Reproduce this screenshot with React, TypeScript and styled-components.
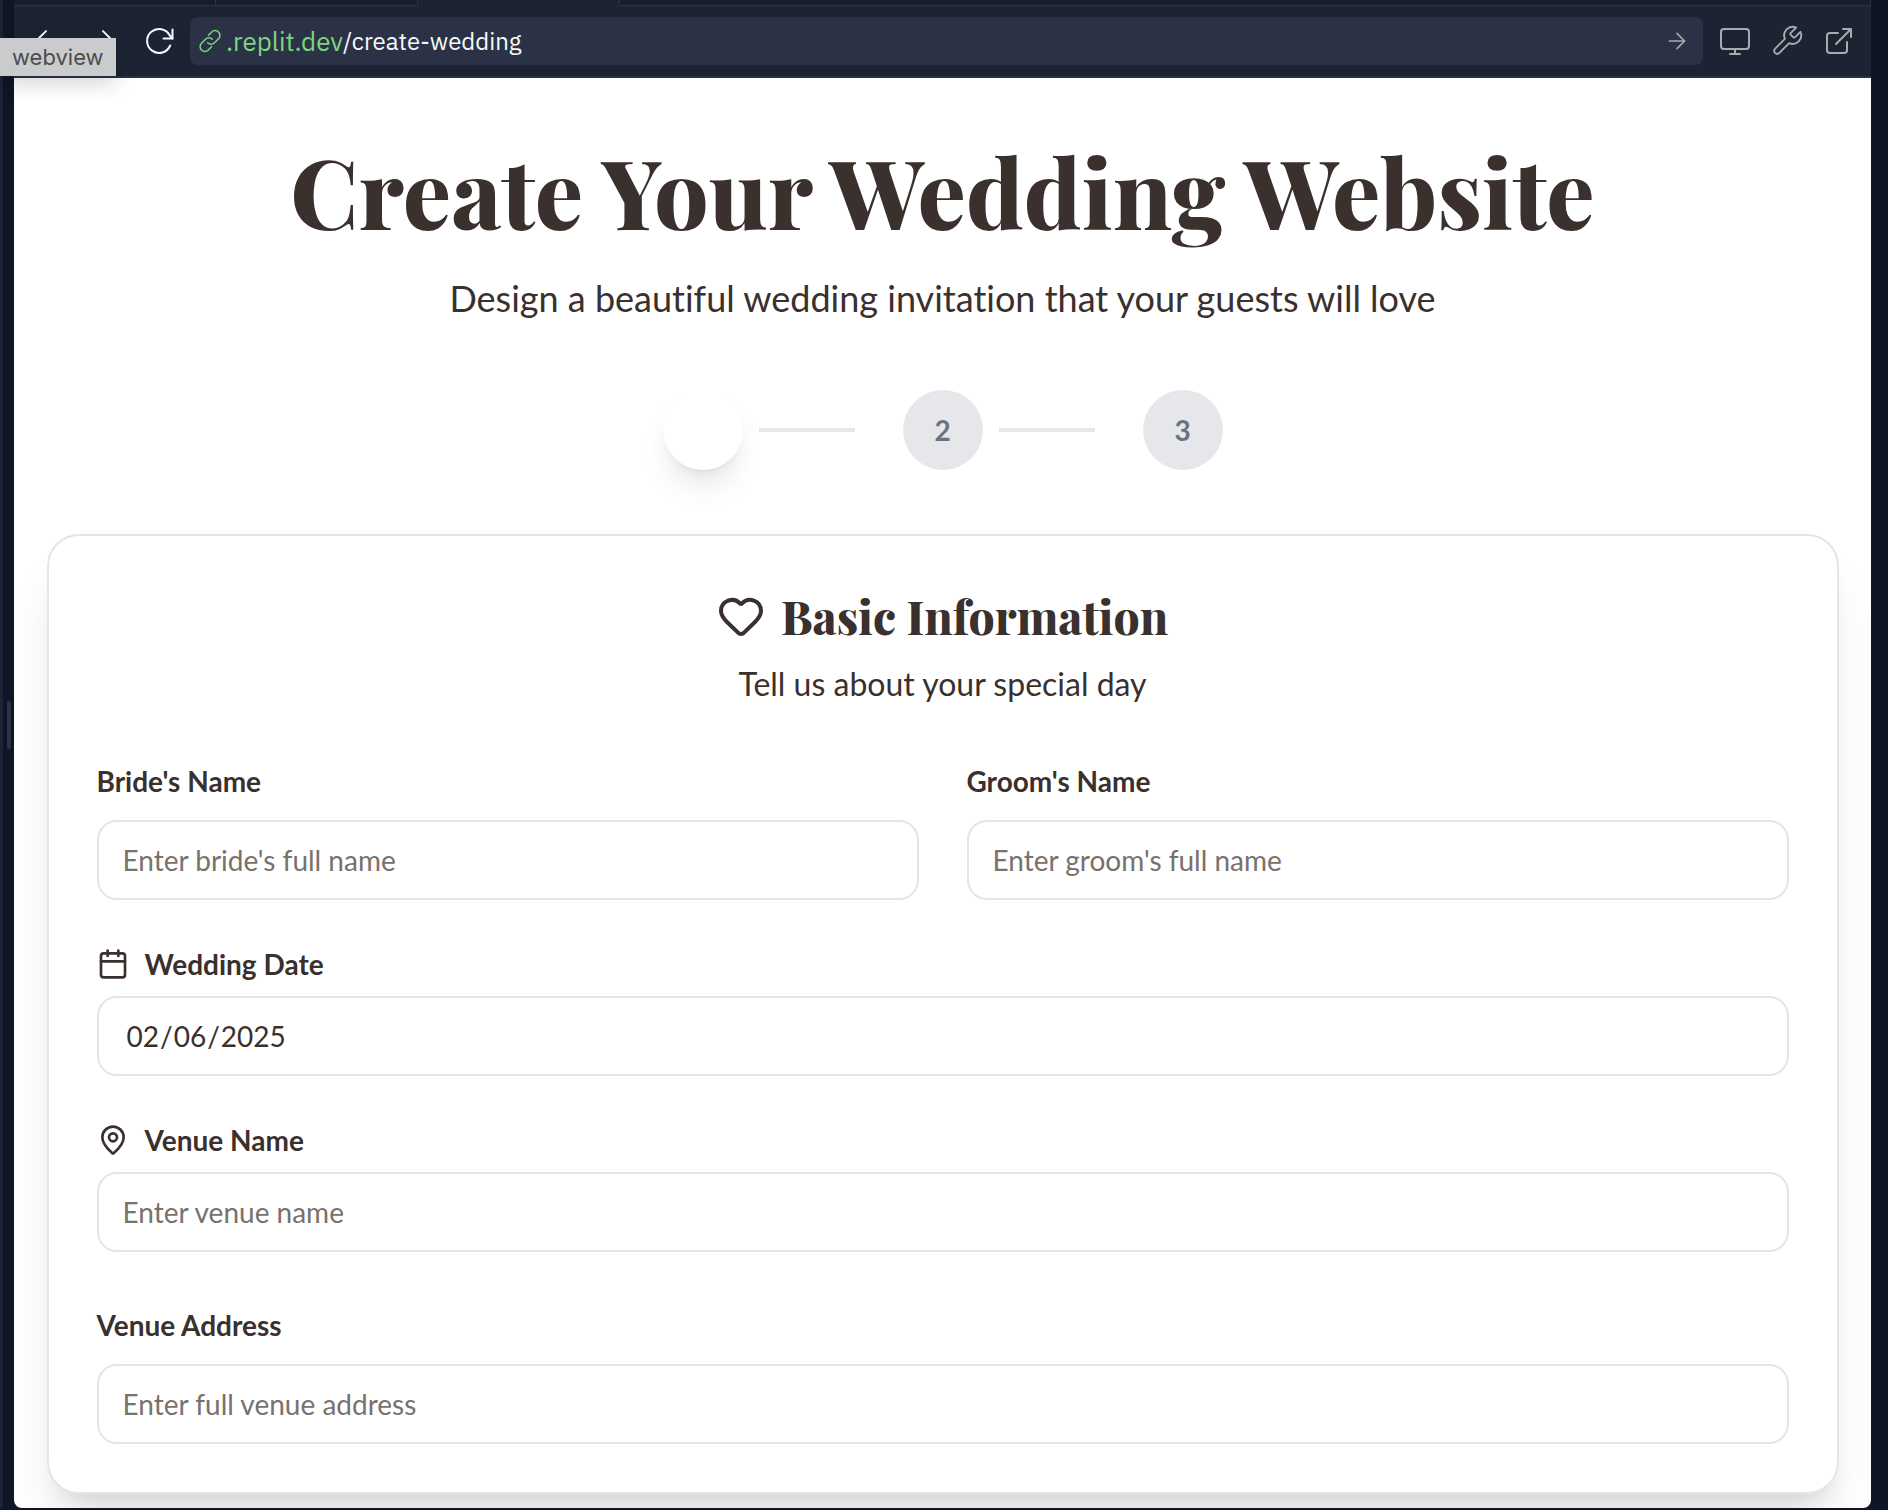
import React from "react";
import styled, { createGlobalStyle } from "styled-components";
import {
  ArrowLeft,
  ArrowRight,
  Calendar,
  Heart,
  MapPin,
} from "lucide-react";

const sans = `Lato, "Liberation Sans", sans-serif`;
const serif = `"Playfair Display", "Liberation Serif", serif`;
const chrome = `"IBM Plex Sans", Roboto, "Liberation Sans", sans-serif`;

const color = {
  ink: "#3a302d",
  muted: "#78716c",
  line: "#e5e5e5",
  shell: "#0e1525",
  bar: "#1c2333",
  tab: "#171d2c",
  raised: "#2b3245",
};

const GlobalStyle = createGlobalStyle`
  *, *::before, *::after { box-sizing: border-box; }
  body { margin: 0; background: ${color.shell}; }
  h1, h2, p { margin: 0; }
  button, input { font: inherit; color: inherit; }
`;

const Shell = styled.div`
  position: relative;
  display: flex;
  min-height: 100vh;
  padding: 0 17px 2px 0;
  background: ${color.shell};
`;

const Sidebar = styled.div`
  width: 3px;
  background: ${color.bar};
  border-bottom-right-radius: 8px;
`;

const Divider = styled.div`
  display: flex;
  align-items: center;
  justify-content: center;
  width: 11px;
  /* keeps the grip at the middle of the first screen */
  max-height: 1450px;
`;

const Grip = styled.div`
  width: 4px;
  height: 48px;
  border-radius: 2px;
  background: ${color.raised};
`;

const Pane = styled.section`
  display: flex;
  flex: 1;
  flex-direction: column;
  min-width: 0;
`;

const TabStrip = styled.div`
  display: grid;
  grid-template-columns: 202px 202px 202px 1fr;
  height: 6px;
`;

const Tab = styled.div<{ $active?: boolean }>`
  background: ${(p) => (p.$active ? color.bar : color.tab)};
  border-right: 1px solid ${color.raised};
  border-bottom: 1px solid ${(p) => (p.$active ? color.bar : color.raised)};
`;

const Toolbar = styled.header`
  display: flex;
  align-items: center;
  height: 72px;
  padding: 0 6px;
  background: ${color.bar};
  border-bottom: 2px solid ${color.raised};
  font-family: ${chrome};
`;

const ButtonGroup = styled.div<{ $gap: number }>`
  display: flex;
  gap: ${(p) => p.$gap}px;
`;

const IconButton = styled.button<{ $dim?: boolean }>`
  display: flex;
  align-items: center;
  justify-content: center;
  width: 52px;
  height: 48px;
  padding: 0;
  border: 0;
  background: none;
  color: ${(p) => (p.$dim ? "#a9acae" : "#f5f9fc")};
`;

const AddressBar = styled.form`
  display: flex;
  flex: 1;
  align-items: center;
  height: 48px;
  margin: 0 6px 0 4px;
  padding-left: 8px;
  border-radius: 8px;
  background: ${color.raised};
  font-size: 24px;
  line-height: 32px;
`;

const Domain = styled.label`
  display: flex;
  align-items: center;
  gap: 4px;
  color: #7dd580;
  font-size: 26px;
`;

const PathInput = styled.input`
  flex: 1;
  min-width: 0;
  height: 32px;
  padding: 0;
  border: 0;
  outline: 0;
  background: none;
  color: #f5f9fc;
`;

const Tooltip = styled.div`
  position: absolute;
  top: 38px;
  left: 0;
  z-index: 1;
  padding: 0 12px;
  background: #cacbcd;
  color: #4b4b4d;
  box-shadow: 0 8px 20px rgba(0, 0, 0, 0.16);
  font-family: Inter, "Liberation Sans", sans-serif;
  font-size: 22px;
  line-height: 38px;
`;

const Page = styled.main`
  flex: 1;
  overflow: hidden;
  padding: 64px 32px 14px;
  border-radius: 0 0 8px 8px;
  background: #fff;
  color: ${color.ink};
  font-family: ${sans};
  font-size: 32px;
  line-height: 48px;
  font-variant-ligatures: none;
`;

const PageTitle = styled.h1`
  font-family: ${serif};
  font-size: 96px;
  font-weight: 800;
  line-height: 96px;
  text-align: center;
`;

const Lead = styled.p`
  margin-top: 32px;
  font-size: 36px;
  line-height: 56px;
  text-align: center;
`;

const Steps = styled.ol`
  display: flex;
  align-items: center;
  justify-content: center;
  gap: 48px;
  margin: 64px 0;
  padding: 0;
  list-style: none;
`;

const Step = styled.li`
  display: flex;
  align-items: center;
  gap: 16px;
`;

const StepCircle = styled.span<{ $current?: boolean }>`
  display: flex;
  align-items: center;
  justify-content: center;
  width: 80px;
  height: 80px;
  border-radius: 50%;
  background: ${(p) => (p.$current ? "#fff" : "#e5e7eb")};
  box-shadow: ${(p) =>
    p.$current
      ? "0 20px 30px -6px rgba(0, 0, 0, 0.1), 0 8px 12px -8px rgba(0, 0, 0, 0.1)"
      : "none"};
  color: #6b7280;
  font-size: 28px;
  font-weight: 700;
`;

const StepLine = styled.span`
  width: 96px;
  height: 4px;
  background: #e5e7eb;
`;

const Card = styled.form`
  max-width: 1792px;
  margin: 0 auto;
  padding: 48px;
  border: 2px solid ${color.line};
  border-radius: 32px;
  box-shadow: 0 40px 50px -10px rgba(0, 0, 0, 0.1),
    0 16px 20px -12px rgba(0, 0, 0, 0.1);
`;

const CardHeader = styled.div`
  display: flex;
  flex-direction: column;
  align-items: center;
  gap: 12px;
  margin-bottom: 48px;
  text-align: center;
`;

const TitleRow = styled.div`
  display: flex;
  align-items: center;
  gap: 16px;
  height: 64px;
`;

const CardTitle = styled.h2`
  font-family: ${serif};
  font-size: 46px;
  font-weight: 800;
  line-height: 48px;
`;

const Fields = styled.div`
  display: grid;
  grid-template-columns: 1fr 1fr;
  gap: 48px;
`;

const Field = styled.div<{ $wide?: boolean }>`
  grid-column: ${(p) => (p.$wide ? "1 / -1" : "auto")};
  display: flex;
  flex-direction: column;
  gap: 16px;
`;

const LabelRow = styled.div`
  height: 48px;
`;

const Label = styled.label`
  font-size: 28px;
  font-weight: 700;
`;

const IconLabel = styled(Label)`
  display: flex;
  align-items: center;
  gap: 16px;
  line-height: 32px;
`;

const TextInput = styled.input`
  width: 100%;
  height: 80px;
  padding: 0 24px;
  border: 2px solid ${color.line};
  border-radius: 20px;
  outline: 0;
  background: #fff;
  font-size: 28px;

  &::placeholder {
    color: ${color.muted};
    opacity: 1;
  }
  &::-webkit-calendar-picker-indicator {
    display: none;
  }
  &::-webkit-datetime-edit {
    padding: 0 3px;
  }
`;

const line = {
  fill: "none",
  stroke: "currentColor",
  strokeLinecap: "round",
  strokeLinejoin: "round",
} as const;

const ReloadIcon = () => (
  <svg width="32" height="32" viewBox="0 0 32 32" strokeWidth="2" {...line}>
    <path d="M26.200 20.500a12 12 0 1 1-0.400-10L28.500 13.500" />
    <path d="M28.500 4.500v9h-9" />
  </svg>
);

const LinkIcon = () => (
  <svg width="24" height="24" viewBox="0 0 24 24" strokeWidth="1.500" {...line}>
    <path d="M10.500 6.200l3.200-3.200a4.600 4.600 0 0 1 6.800 0a4.800 4.800 0 0 1 0 6.800l-4 4a4.800 4.800 0 0 1-6.800 0" />
    <path d="M13.500 17.800l-3.200 3.200a4.600 4.600 0 0 1-6.800 0a4.800 4.800 0 0 1 0-6.800l4-4a4.800 4.800 0 0 1 6.800 0" />
  </svg>
);

const MonitorIcon = () => (
  <svg width="32" height="32" viewBox="0 0 32 32" strokeWidth="2" {...line}>
    <rect x="2" y="4" width="28" height="20" rx="3" />
    <path d="M16 24v5M11 29h10" />
  </svg>
);

const WrenchIcon = () => (
  <svg width="34" height="34" viewBox="0 0 24 24" strokeWidth="1.300" {...line}>
    <path d="M14.700 6.300a1 1 0 0 0 0 1.400l1.600 1.600a1 1 0 0 0 1.400 0l3.770-3.770a6 6 0 0 1-7.940 7.940l-6.910 6.910a2.120 2.120 0 0 1-3-3l6.910-6.910a6 6 0 0 1 7.940-7.940l-3.760 3.760z" />
  </svg>
);

const ExternalIcon = () => (
  <svg width="32" height="32" viewBox="0 0 32 32" strokeWidth="2" {...line}>
    <path d="M15 8H7a3 3 0 0 0-3 3v14a3 3 0 0 0 3 3h14a3 3 0 0 0 3-3v-8" />
    <path d="M20 4h8v8M28 4L13 19" />
  </svg>
);

export default function App() {
  return (
    <>
      <GlobalStyle />
      <Shell>
        <Sidebar />
        <Divider>
          <Grip />
        </Divider>
        <Pane>
          <TabStrip>
            <Tab />
            <Tab />
            <Tab $active />
            <Tab />
          </TabStrip>
          <Toolbar>
            <ButtonGroup $gap={5}>
              <IconButton type="button" aria-label="Back">
                <ArrowLeft size={34} strokeWidth={1.4} />
              </IconButton>
              <IconButton type="button" aria-label="Forward">
                <ArrowRight size={34} strokeWidth={1.4} />
              </IconButton>
              <IconButton type="button" aria-label="Reload">
                <ReloadIcon />
              </IconButton>
            </ButtonGroup>
            <AddressBar>
              <Domain htmlFor="path">
                <LinkIcon />
                .replit.dev
              </Domain>
              <PathInput id="path" defaultValue="/create-wedding" />
              <IconButton type="button" $dim aria-label="Go">
                <ArrowRight size={26} strokeWidth={1.5} />
              </IconButton>
            </AddressBar>
            <ButtonGroup $gap={0}>
              <IconButton type="button" $dim aria-label="Device size">
                <MonitorIcon />
              </IconButton>
              <IconButton type="button" $dim aria-label="Developer tools">
                <WrenchIcon />
              </IconButton>
              <IconButton type="button" $dim aria-label="Open in new tab">
                <ExternalIcon />
              </IconButton>
            </ButtonGroup>
          </Toolbar>

          <Page>
            <PageTitle>Create Your Wedding Website</PageTitle>
            <Lead>
              Design a beautiful wedding invitation that your guests will love
            </Lead>

            <Steps>
              <Step aria-current="step">
                <StepCircle $current />
                <StepLine />
              </Step>
              <Step>
                <StepCircle>2</StepCircle>
                <StepLine />
              </Step>
              <Step>
                <StepCircle>3</StepCircle>
              </Step>
            </Steps>

            <Card>
              <CardHeader>
                <TitleRow>
                  <Heart size={48} />
                  <CardTitle>Basic Information</CardTitle>
                </TitleRow>
                <p>Tell us about your special day</p>
              </CardHeader>

              <Fields>
                <Field>
                  <LabelRow>
                    <Label htmlFor="bride">Bride's Name</Label>
                  </LabelRow>
                  <TextInput id="bride" placeholder="Enter bride's full name" />
                </Field>
                <Field>
                  <LabelRow>
                    <Label htmlFor="groom">Groom's Name</Label>
                  </LabelRow>
                  <TextInput id="groom" placeholder="Enter groom's full name" />
                </Field>
                <Field $wide>
                  <IconLabel htmlFor="date">
                    <Calendar size={32} />
                    Wedding Date
                  </IconLabel>
                  <TextInput id="date" type="date" defaultValue="2025-02-06" />
                </Field>
                <Field $wide>
                  <IconLabel htmlFor="venue">
                    <MapPin size={32} />
                    Venue Name
                  </IconLabel>
                  <TextInput id="venue" placeholder="Enter venue name" />
                </Field>
                <Field $wide>
                  <LabelRow>
                    <Label htmlFor="address">Venue Address</Label>
                  </LabelRow>
                  <TextInput
                    id="address"
                    placeholder="Enter full venue address"
                  />
                </Field>
              </Fields>
            </Card>
          </Page>
        </Pane>
        <Tooltip role="tooltip">webview</Tooltip>
      </Shell>
    </>
  );
}
